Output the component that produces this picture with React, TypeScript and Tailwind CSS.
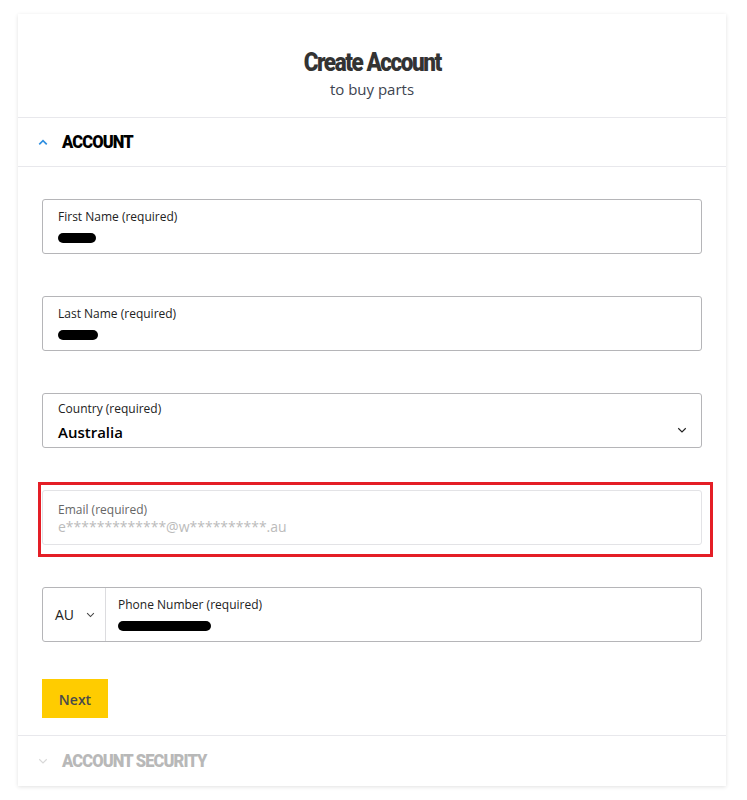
import React from "react";

const heading = { fontFamily: "Roboto, 'Liberation Sans', sans-serif" };
const body = { fontFamily: "'Open Sans', 'Noto Sans', sans-serif" };

const Chevron = ({ up, className, sw = 1.4 }: { up?: boolean; className?: string; sw?: number }) => (
  <svg viewBox="0 0 12 8" className={className} fill="none" stroke="currentColor" strokeWidth={sw}>
    {up ? <path d="M1.5 6.5 6 2l4.5 4.5" /> : <path d="M1.5 1.5 6 6l4.5-4.5" />}
  </svg>
);

const Redacted = ({ w }: { w: number }) => (
  <div className="h-[10px] rounded-full bg-black" style={{ width: w }} />
);

const Field = ({ label, children }: { label: string; children: React.ReactNode }) => (
  <div className="h-[55px] rounded-[3px] border border-[#b5b5b8] px-[15px] pt-[8px]">
    <div className="text-[12px] leading-[17px] text-[#222]">{label}</div>
    <div className="mt-[8px]">{children}</div>
  </div>
);

export default function App() {
  return (
    <div className="min-h-screen bg-white pt-[14px] px-[18px]" style={body}>
      <div className="w-[708px] bg-white shadow-[0_1px_4px_rgba(0,0,0,0.12)]">
        {/* header */}
        <div className="flex h-[103px] flex-col items-center pt-[35px]">
          <h1
            className="text-[25px] font-black leading-[28px] tracking-[-1.6px] text-[#333] scale-x-[0.9]"
            style={heading}
          >
            Create Account
          </h1>
          <div className="mt-[1px] text-[15px] leading-[22px] text-[#3d4450]">to buy parts</div>
        </div>

        {/* account section */}
        <div className="flex h-[50px] items-center border-y border-[#e8e8ec] pl-[20px]">
          <Chevron up sw={2} className="w-[10px] text-[#2f8fe0]" />
          <span
            className="ml-[14px] origin-left scale-x-[0.87] text-[19px] font-black tracking-[-1px] text-black"
            style={heading}
          >
            ACCOUNT
          </span>
        </div>

        <div className="flex flex-col px-[24px] pt-[32px] pb-[17px]">
          <Field label="First Name (required)">
            <Redacted w={38} />
          </Field>

          <div className="mt-[42px]">
            <Field label="Last Name (required)">
              <Redacted w={40} />
            </Field>
          </div>

          <div className="mt-[42px] flex h-[55px] items-end rounded-[3px] border border-[#b5b5b8] pl-[15px] pr-[14px] pb-[5px]">
            <div className="flex-1">
              <div className="text-[12px] leading-[17px] text-[#222]">Country (required)</div>
              <div className="mt-[5px] text-[15px] font-semibold leading-[20px] text-black">Australia</div>
            </div>
            <Chevron className="mb-[8px] w-[10px] text-[#222]" />
          </div>

          <div className="relative mt-[42px]">
            <div className="h-[55px] rounded-[3px] border border-[#e3e3e6] px-[15px] pt-[10px]">
              <div className="text-[12px] leading-[17px] text-[#666]">Email (required)</div>
              <div className="text-[14px] leading-[18px] text-[#bbbbbb]">e*************@w**********.au</div>
            </div>
            <div className="pointer-events-none absolute -left-[4px] -right-[11px] -top-[8px] -bottom-[12px] border-[3px] border-[#e41e26]" />
          </div>

          <div className="mt-[42px] flex h-[55px] rounded-[3px] border border-[#b5b5b8]">
            <div className="flex w-[63px] items-center border-r border-[#dcdcdf] pl-[12px]">
              <span className="text-[14px] text-[#222]">AU</span>
              <Chevron className="ml-[12px] w-[9px] text-[#444]" />
            </div>
            <div className="flex-1 px-[12px] pt-[8px]">
              <div className="text-[12px] leading-[17px] text-[#222]">Phone Number (required)</div>
              <div className="mt-[8px]">
                <Redacted w={93} />
              </div>
            </div>
          </div>

          <button className="mt-[37px] h-[39px] w-[66px] bg-[#ffcc00] pt-[1px] text-[14px] font-semibold text-[#4a4a4a]">
            Next
          </button>
        </div>

        {/* account security */}
        <div className="flex h-[51px] items-center border-t border-[#e8e8ec] pl-[20px]">
          <Chevron className="w-[10px] text-[#d8d8d8]" />
          <span
            className="ml-[14px] origin-left scale-x-[0.87] text-[19px] font-black tracking-[-1px] text-[#b8b8b8]"
            style={heading}
          >
            ACCOUNT SECURITY
          </span>
        </div>
      </div>
    </div>
  );
}
